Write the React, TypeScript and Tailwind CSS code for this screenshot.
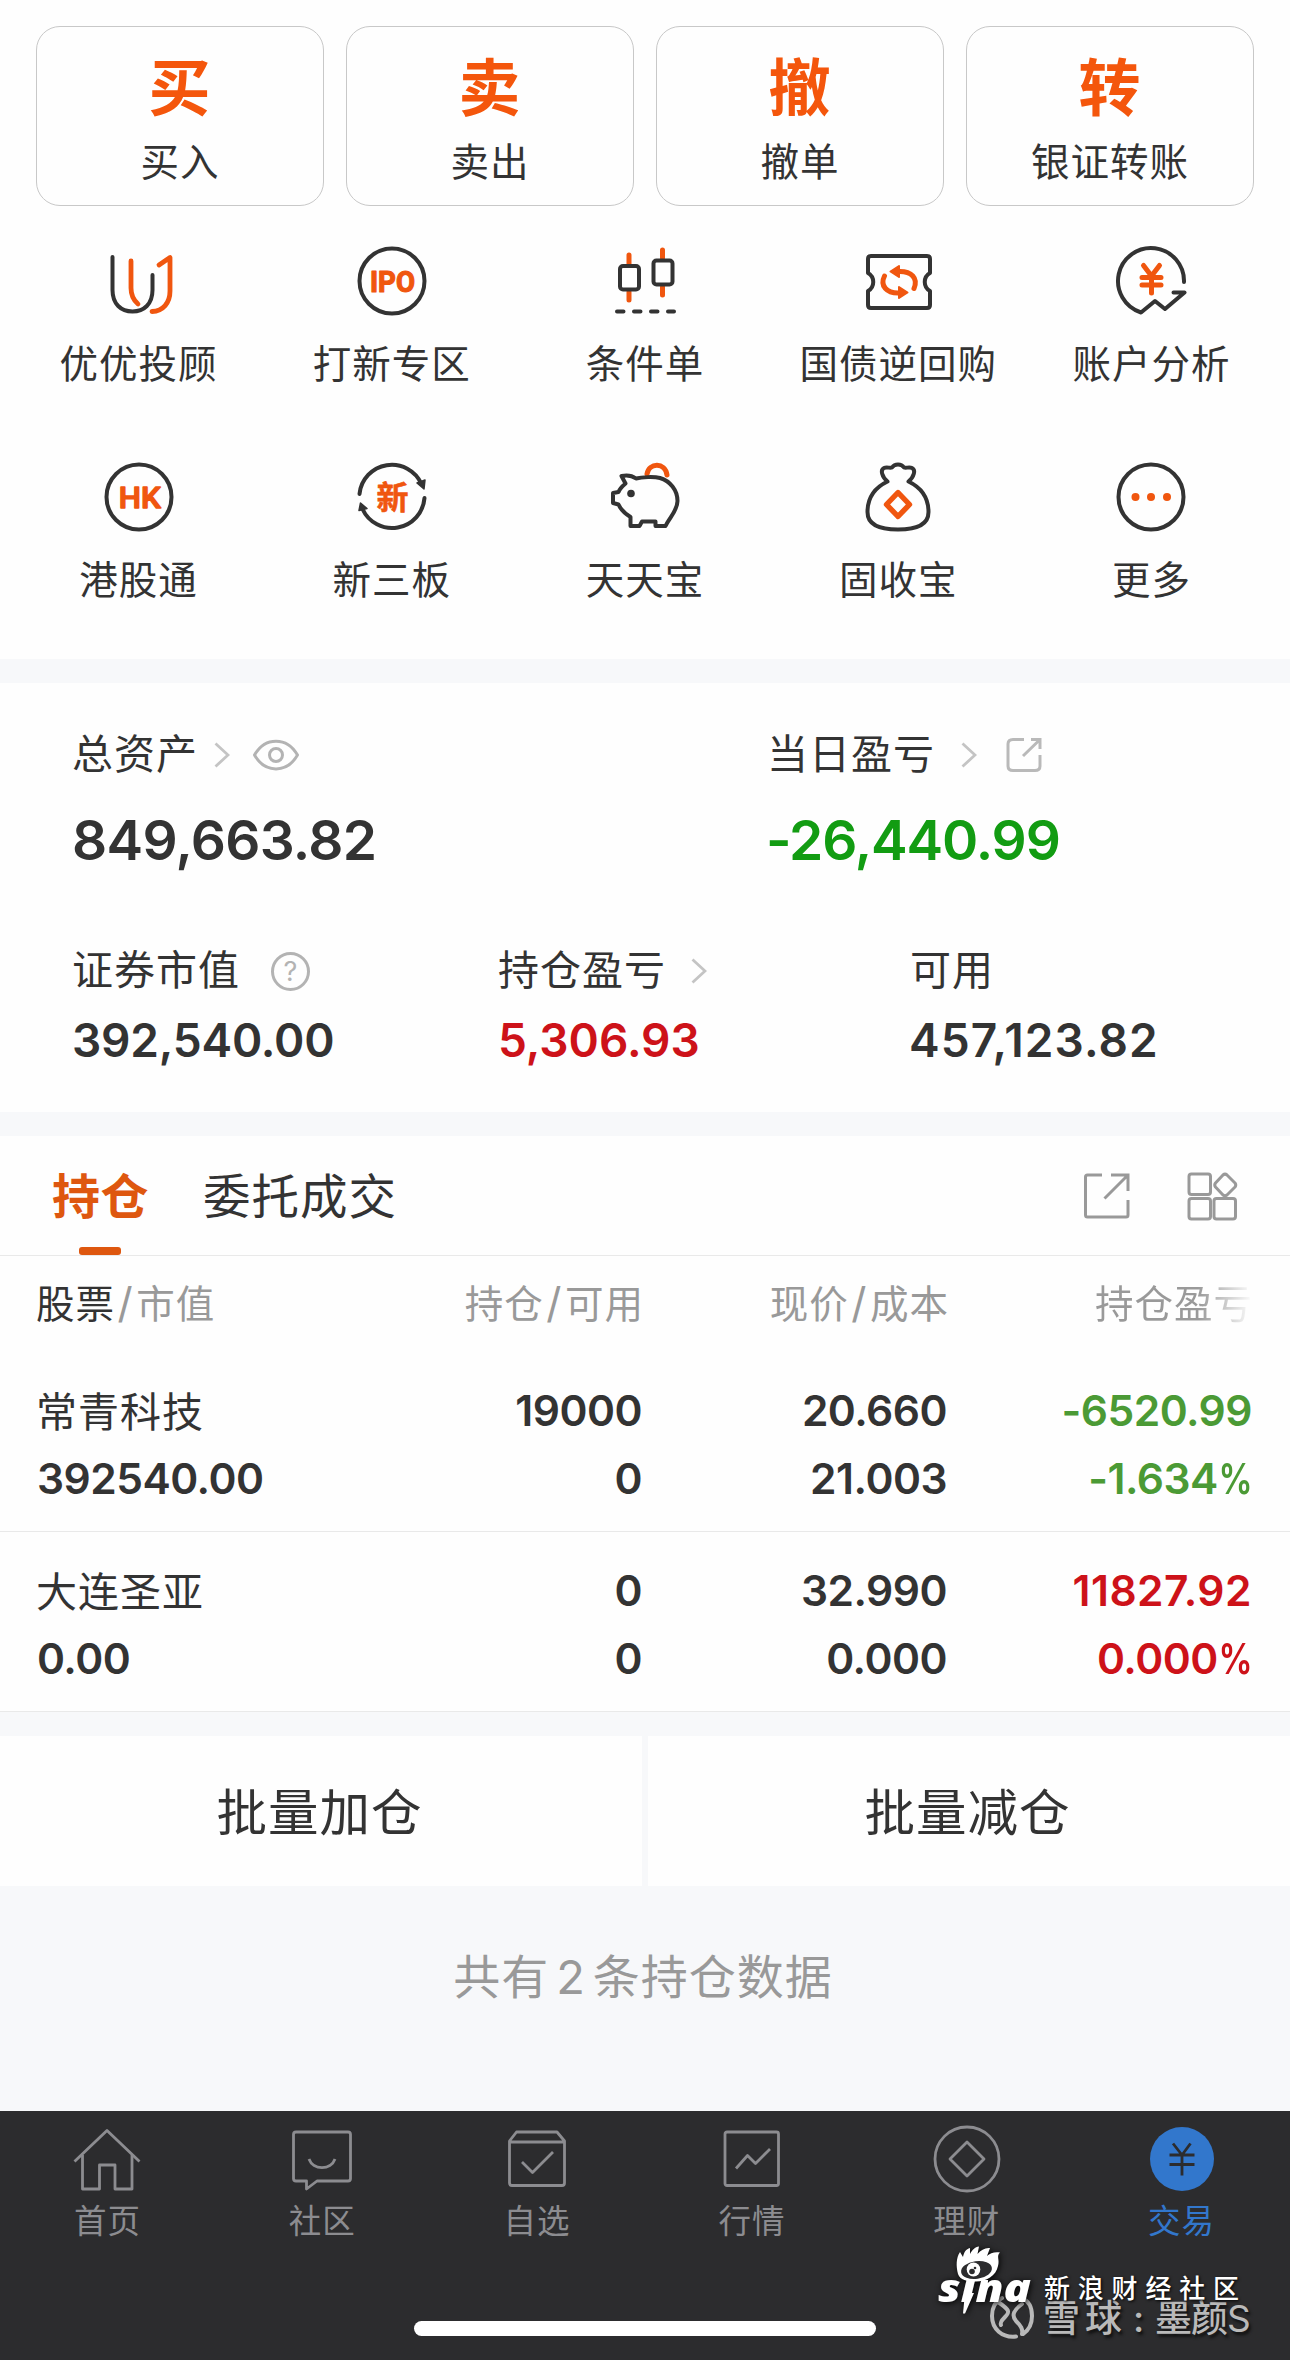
import type React from "react"

const DARK = "#333333"
const ORANGE = "#f0560f"

type IconProps = { children: React.ReactNode }

// 72x72 canvas shared by the shortcut icons
function ShortcutIcon({ children }: IconProps) {
  return (
    <svg
      className="w-[72px] h-[72px]"
      viewBox="0 0 72 72"
      fill="none"
      stroke={DARK}
      strokeWidth="4"
      strokeLinecap="round"
      strokeLinejoin="round"
    >
      {children}
    </svg>
  )
}

function TabIcon({ children }: IconProps) {
  return (
    <svg className="w-[72px] h-[72px]" viewBox="0 0 72 72" fill="none" stroke="currentColor" strokeWidth="2.8" strokeLinejoin="round">
      {children}
    </svg>
  )
}

function Chevron({ className = "" }: { className?: string }) {
  return (
    <svg className={`w-4 h-[26px] ${className}`} viewBox="0 0 16 26" fill="none" stroke="#c4c4c4" strokeWidth="2.8">
      <path d="M1.5 1.5 L14 13 L1.5 24.5" />
    </svg>
  )
}

const actions = [
  { mark: "买", label: "买入" },
  { mark: "卖", label: "卖出" },
  { mark: "撤", label: "撤单" },
  { mark: "转", label: "银证转账" },
]

const shortcuts = [
  {
    label: "优优投顾",
    icon: (
      <ShortcutIcon>
        <path d="M9.5 12 V45 C9.5 59 18 66.5 29.5 66.5 S49.5 59 49.5 45 V30" />
        <path d="M28 16 V43 Q28 53 35 59" stroke={ORANGE} strokeWidth="4.8" />
        <path d="M56 20 L67 12.5 V46 C67 58 60 66 49 66.5" stroke={ORANGE} strokeWidth="4.8" />
      </ShortcutIcon>
    ),
  },
  {
    label: "打新专区",
    icon: (
      <ShortcutIcon>
        <circle cx="36" cy="36" r="32.5" />
        <text
          x="36.5"
          y="46.5"
          textAnchor="middle"
          textLength="45"
          lengthAdjust="spacingAndGlyphs"
          fontFamily="Roboto, sans-serif"
          fontSize="30"
          fontWeight="700"
          fill={ORANGE}
          stroke={ORANGE}
          strokeWidth="1.2"
        >
          IPO
        </text>
      </ShortcutIcon>
    ),
  },
  {
    label: "条件单",
    icon: (
      <ShortcutIcon>
        <g transform="translate(-1 0)">
          <path d="M21 10 V19 M21 47 V55 M54.5 5 V13 M54.5 42 V50" stroke={ORANGE} strokeWidth="5" />
          <rect x="12" y="21" width="19" height="23.5" rx="3" />
          <rect x="45.5" y="15.5" width="19" height="24" rx="3" />
          <path d="M9 66.5 H15.5 M26 66.5 H32.5 M43 66.5 H49.5 M60 66.5 H66" />
        </g>
      </ShortcutIcon>
    ),
  },
  {
    label: "国债逆回购",
    icon: (
      <ShortcutIcon>
        <path d="M9 11 H65 Q68 11 68 14 V28 C61 32 61 42 68 46 V60 Q68 63 65 63 H9 Q6 63 6 60 V46 C13 42 13 32 6 28 V14 Q6 11 9 11 Z" />
        <path d="M22.5 31 C17.5 41 25 48 36 48" stroke={ORANGE} strokeWidth="5" />
        <path d="M52 43.5 C56.5 33 49 26.5 38 26.5" stroke={ORANGE} strokeWidth="5" />
        <path d="M37 42 L45.5 47.5 L37 53 Z M37 21 L28.5 26.5 L37 32 Z" fill={ORANGE} stroke={ORANGE} strokeWidth="2" />
      </ShortcutIcon>
    ),
  },
  {
    label: "账户分析",
    icon: (
      <ShortcutIcon>
        <path d="M69 37 A33 33 0 1 0 26 67.5 L40 56 L50 64 L69.5 47.5 H58.5" />
        <path d="M28.5 20.5 L36.5 31 L44.5 20.5 M36.5 31 V48 M27 32.5 H46 M27 40 H46" stroke={ORANGE} strokeWidth="5" />
      </ShortcutIcon>
    ),
  },
  {
    label: "港股通",
    icon: (
      <ShortcutIcon>
        <circle cx="36" cy="36" r="32.5" />
        <text
          x="36.8"
          y="46.5"
          textAnchor="middle"
          textLength="42"
          lengthAdjust="spacingAndGlyphs"
          fontFamily="Roboto, sans-serif"
          fontSize="30"
          fontWeight="500"
          fill={ORANGE}
          stroke={ORANGE}
          strokeWidth="1.4"
        >
          HK
        </text>
      </ShortcutIcon>
    ),
  },
  {
    label: "新三板",
    icon: (
      <ShortcutIcon>
        <path d="M3.5 33 A32.5 32.5 0 0 1 65.5 23" />
        <path d="M68.5 37 A32.5 32.5 0 0 1 6.5 48" />
        <path d="M61 22 L69 19 L68 28 Z M3 49.5 L11 47.5 L4.5 42 Z" fill={DARK} strokeWidth="1.5" />
        <text
          x="36.5"
          y="47.5"
          textAnchor="middle"
          fontFamily="'Noto Sans CJK SC', sans-serif"
          fontSize="32"
          fontWeight="700"
          fill={ORANGE}
          stroke={ORANGE}
          strokeWidth="0.6"
        >
          新
        </text>
      </ShortcutIcon>
    ),
  },
  {
    label: "天天宝",
    icon: (
      <ShortcutIcon>
        <g transform="translate(-1 0)">
          <path d="M39 13 C41 1.5 57 1 59 14" stroke={ORANGE} strokeWidth="5" />
          <path d="M13.5 15 C18 14 24 14.5 28 17.5 C34 16 46 15.5 52 17 C62 20 69.5 29 69.5 40 C69.5 50 61 57 57.5 65 H47.5 V60.5 H34 L31.5 65 H22.5 V56 C16 52 13 49 10.5 43.5 L5 42 V32 L10.5 31 C12 27 14.5 25 17.5 22.5 Z" />
          <circle cx="23" cy="32.5" r="3.8" fill={DARK} stroke="none" />
        </g>
      </ShortcutIcon>
    ),
  },
  {
    label: "固收宝",
    icon: (
      <ShortcutIcon>
        <path d="M25.5 20.5 C20 16 18 9 22 7 C25 5.5 28 7.5 30 6.5 C32 3.5 33.5 3.5 36 3.5 S40 3.5 42 6.5 C44 7.5 47 5.5 50 7 C54 9 52 16 46.5 20.5 C60 27 66.5 38 66.5 51 C66.5 64 54 68.5 36 68.5 S5.5 64 5.5 51 C5.5 38 12 27 25.5 20.5 Z" />
        <path d="M36 31.5 L47.5 43.5 L36 55.5 L24.5 43.5 Z" stroke={ORANGE} strokeWidth="5.4" />
      </ShortcutIcon>
    ),
  },
  {
    label: "更多",
    icon: (
      <ShortcutIcon>
        <circle cx="36" cy="36" r="32.5" />
        <g fill={ORANGE} stroke="none">
          <circle cx="20.5" cy="36" r="4" />
          <circle cx="36" cy="36" r="4" />
          <circle cx="52" cy="36" r="4" />
        </g>
      </ShortcutIcon>
    ),
  },
]

const holdings = [
  {
    name: "常青科技",
    marketValue: "392540.00",
    amount: "19000",
    available: "0",
    price: "20.660",
    cost: "21.003",
    profit: "-6520.99",
    rate: "-1.634",
    color: "text-[#4b9a35]",
    spacing: "tracking-[-0.5px]",
  },
  {
    name: "大连圣亚",
    marketValue: "0.00",
    amount: "0",
    available: "0",
    price: "32.990",
    cost: "0.000",
    profit: "11827.92",
    rate: "0.000",
    color: "text-[#cd1219]",
    spacing: "tracking-[0.5px]",
  },
]

const tabs = [
  {
    label: "首页",
    icon: (
      <TabIcon>
        <path d="M3.5 38.5 L36 7.5 L68.5 38.5" />
        <path d="M11.5 32 V66 H28.5 V42 H44 V66 H61 V32" />
      </TabIcon>
    ),
  },
  {
    label: "社区",
    icon: (
      <TabIcon>
        <path d="M10 9 H62 Q64.5 9 64.5 11.5 V55.5 Q64.5 58 62 58 H31 L20.5 66 V58 H10 Q7.5 58 7.5 55.5 V11.5 Q7.5 9 10 9 Z" />
        <path d="M23 36 C27 47.5 45 47.5 49 36" />
      </TabIcon>
    ),
  },
  {
    label: "自选",
    icon: (
      <TabIcon>
        <path d="M8.5 18 L15.5 9 H56 L63.5 18 V60 Q63.5 62.5 61 62.5 H11 Q8.5 62.5 8.5 60 Z M8.5 19 H63.5" />
        <path d="M21 39 L31.5 49.5 L52 29" />
      </TabIcon>
    ),
  },
  {
    label: "行情",
    icon: (
      <TabIcon>
        <rect x="9" y="9" width="53.5" height="53.5" rx="2" />
        <path d="M20 45.5 L31.5 32.5 L39.5 40.5 L54 26" />
      </TabIcon>
    ),
  },
  {
    label: "理财",
    icon: (
      <TabIcon>
        <circle cx="36" cy="36" r="32" />
        <path d="M36 19 L53 36 L36 53 L19 36 Z" />
      </TabIcon>
    ),
  },
  {
    label: "交易",
    active: true,
    icon: (
      <TabIcon>
        <circle cx="36" cy="36" r="32" fill="currentColor" stroke="none" />
        <path d="M27 20.5 L36 32 L44.5 20.5 M36 32 V52.5 M23.5 32 H48.5 M23.5 41.5 H48.5" stroke="#2c2c2e" />
      </TabIcon>
    ),
  },
]

function Slash() {
  return <span className="mx-[2.5px] text-[42px] leading-none">/</span>
}

function Watermarks() {
  return (
    <>
      <svg className="absolute left-[988px] top-[183px] w-[48px] h-[46px]" viewBox="0 0 48 46" fill="none" stroke="#b9b9b9" strokeWidth="4" strokeLinecap="round">
        <path d="M28 42.5 C14 44 4 35 4 22 C4 13 8 7 14 4 M34 4 C41 7 44 14 44 22 C44 30 41 36 35 40" />
        <path d="M10 8 C22 16 22 18 17 23 C13 27 12 29 13 31" />
        <path d="M34 10 C26 16 23 21 28 27 C33 32 35 35 34 40" />
      </svg>
      <div className="absolute left-[1043px] top-[189px] flex h-[37px] items-center whitespace-nowrap text-[37px] font-medium leading-none text-[#b9b9b9] [text-shadow:2px_3px_3px_#111]">
        <span className="w-[90px] tracking-[5px]">雪球</span>
        <span className="w-[22px]">:</span>
        <span className="tracking-[-1px]">墨颜</span>
        <span className="font-normal">S</span>
      </div>
      <svg className="absolute left-[934px] top-[132px] w-[104px] h-[76px] overflow-visible drop-shadow-[1px_1px_3px_#000]" viewBox="0 0 104 76">
        <path
          fill="#fff"
          d="M24 31 C22 23 22 15 26 9 L29 14 C30 9 32 6 36 5 L36 11 C38 7 41 4 45 3.5 L43.5 11 C47 7 51 4.5 56 5 L53 13 C56 10 61 8.5 66 9.5 C62 13 66 17 64 23 C62 33 52 38.5 42 38.5 C33 38.5 26 37 24 31 Z"
        />
        <ellipse cx="42.5" cy="27" rx="15.5" ry="8.8" fill="#2c2c2e" transform="rotate(-8 42.5 27)" />
        <ellipse cx="39.5" cy="26.5" rx="6.8" ry="7" fill="#fff" />
        <circle cx="38" cy="28.5" r="2.8" fill="#2c2c2e" />
        <circle cx="41" cy="25" r="1.3" fill="#2c2c2e" />
        <text
          x="4"
          y="58.5"
          textLength="93"
          lengthAdjust="spacingAndGlyphs"
          fontFamily="'Open Sans', sans-serif"
          fontSize="39"
          fontStyle="italic"
          fontWeight="800"
          fill="#fff"
        >
          sına
        </text>
        <path fill="#fff" d="M31 50 H40 L31 70.5 L29 70.5 Z" />
      </svg>
      <span className="absolute left-[1044px] top-[165px] whitespace-nowrap text-[26px] font-medium leading-[26px] tracking-[7.8px] text-white [text-shadow:1px_1px_3px_#000]">
        新浪财经社区
      </span>
    </>
  )
}

export default function App() {
  return (
    <div
      lang="zh-CN"
      className="flex h-[2360px] w-[1290px] flex-col overflow-hidden bg-[#f7f8fa] font-[Inter,'Noto_Sans_CJK_SC',sans-serif] text-[#333333]"
    >
      {/* Trade actions and shortcuts */}
      <section className="h-[659px] bg-[#fefefe] pt-[26px]">
        <div className="grid grid-cols-4 gap-[22px] px-9">
          {actions.map((action) => (
            <button
              key={action.mark}
              className="flex h-[180px] flex-col items-center rounded-3xl border border-[#c8c8c8] pt-[30px]"
            >
              <span className="-ml-px text-[62px] font-bold leading-[64px] text-[#f4560c]">{action.mark}</span>
              <span className="mt-[21px] text-[38.5px] leading-[40px] tracking-[1px]">{action.label}</span>
            </button>
          ))}
        </div>

        <div className="mt-[39px] grid grid-cols-5 gap-y-[78px] pl-[12px] pr-[12px]">
          {shortcuts.map((item) => (
            <div key={item.label} className="flex flex-col items-center">
              {item.icon}
              <span className="mt-[27px] -mb-px text-[38.5px] leading-[40px] tracking-[1px]">{item.label}</span>
            </div>
          ))}
        </div>
      </section>

      {/* Assets */}
      <section className="mt-6 h-[429px] bg-[#fefefe] pl-[72px] pt-[50px]">
        <div className="flex">
          <div className="w-[695px]">
            <div className="flex h-11 items-center">
              <span className="text-[41px] tracking-[1px]">总资产</span>
              <Chevron className="ml-[16px]" />
              <svg className="ml-[22px] w-[48px] h-[34px]" viewBox="0 0 48 34" fill="none" stroke="#b3b3b3" strokeWidth="3">
                <path d="M2.5 17 C13 -1.5 35 -1.5 45.5 17 C35 35.5 13 35.5 2.5 17 Z" strokeLinejoin="round" />
                <circle cx="24" cy="17" r="6.5" />
              </svg>
            </div>
            <p className="mt-[33px] text-[55px] font-semibold leading-[60px] tracking-[-0.7px]">849,663.82</p>
          </div>
          <div>
            <div className="flex h-11 items-center">
              <span className="text-[41px] tracking-[1px]">当日盈亏</span>
              <Chevron className="ml-[26px]" />
              <svg className="ml-[28px] w-[38px] h-[36px]" viewBox="0 0 38 36" fill="none" stroke="#b9b9b9" strokeWidth="3">
                <path d="M19 2.5 H8 Q3 2.5 3 7 V29 Q3 33.5 8 33.5 H30 Q35 33.5 35 29 V18" />
                <path d="M26 2.5 H35 V12 M35 2.5 L18 19" />
              </svg>
            </div>
            <p className="-ml-px mt-[33px] text-[55px] font-semibold leading-[60px] tracking-[-1.1px] text-[#129c12]">-26,440.99</p>
          </div>
        </div>

        <div className="mt-[79px] flex">
          <div className="w-[426px]">
            <div className="flex h-11 items-center">
              <span className="text-[41px] tracking-[1px]">证券市值</span>
              <span className="ml-[31px] flex h-[39px] w-[39px] items-center justify-center rounded-full border-3 border-[#b3b3b3] text-[27px] leading-none text-[#b3b3b3]">
                ?
              </span>
            </div>
            <p className="mt-[22px] text-[46px] font-semibold leading-[50px] tracking-[-0.2px]">392,540.00</p>
          </div>
          <div className="w-[412px]">
            <div className="flex h-11 items-center">
              <span className="text-[41px] tracking-[1px]">持仓盈亏</span>
              <Chevron className="ml-[25px]" />
            </div>
            <p className="mt-[22px] text-[46px] font-semibold leading-[50px] text-[#cd1219]">5,306.93</p>
          </div>
          <div>
            <div className="flex h-11 items-center">
              <span className="text-[41px] tracking-[1px]">可用</span>
            </div>
            <p className="-ml-px mt-[22px] text-[46px] font-semibold leading-[50px] tracking-[1.1px]">457,123.82</p>
          </div>
        </div>
      </section>

      {/* Holdings */}
      <section className="mt-6 bg-[#fefefe]">
        <div className="flex h-[120px] items-center border-b border-[#e9e9e9] pl-[52px] pr-[52px]">
          <div className="relative flex h-full items-center pt-[3px] text-[48px] font-semibold tracking-[0.5px] text-[#de570f]">
            持仓
            <span className="absolute bottom-0 left-[27px] h-2 w-[42px] rounded-[3px] bg-[#de570f]" />
          </div>
          <span className="ml-[54px] pt-0.5 text-[47.5px] tracking-[1px]">委托成交</span>
          <svg className="ml-auto w-[48px] h-[48px]" viewBox="0 0 48 48" fill="none" stroke="#999999" strokeWidth="3">
            <path d="M19 3 H4.5 Q2.5 3 2.5 5 V43 Q2.5 45 4.5 45 H43 Q45 45 45 43 V28" />
            <path d="M28 3 H45 V19 M45 3 L21.5 26.5" />
          </svg>
          <svg className="ml-[55px] w-[52px] h-[50px]" viewBox="0 0 52 50" fill="none" stroke="#999999" strokeWidth="3" strokeLinejoin="round">
            <rect x="3" y="3" width="21.5" height="20.5" rx="2.5" />
            <rect x="3" y="27.5" width="21.5" height="20.5" rx="2.5" />
            <rect x="28" y="27.5" width="21.5" height="20.5" rx="2.5" />
            <path d="M37 4 Q39 2.3 41 4 L49 12 Q50.5 14 49 16 L41 24 Q39 25.5 37 24 L29.5 16 Q28 14 29.5 12 Z" />
          </svg>
        </div>

        <div className="grid h-24 grid-cols-[300px_305px_305px_305px] items-center pl-[37px] pt-[2px] text-right text-[38.5px] tracking-[1px] text-[#999999]">
          <span className="-ml-px text-left">
            <span className="text-[#333333]">股票</span>
            <Slash />
            市值
          </span>
          <span className="-mr-[2px]">
            持仓
            <Slash />
            可用
          </span>
          <span className="-mr-[2px]">
            现价
            <Slash />
            成本
          </span>
          <span className="-mr-px ml-auto bg-linear-to-r from-[#999999] from-65% to-[#fefefe] bg-clip-text text-transparent">持仓盈亏</span>
        </div>

        {holdings.map((row) => (
          <div
            key={row.name}
            className="grid h-[180px] grid-cols-[300px_305px_305px_305px] content-start gap-y-4 border-b border-[#e9e9e9] pl-[37px] pt-[33px] text-right text-[42.5px] font-semibold leading-[52px] tracking-[-0.5px]"
          >
            <span className="-ml-px pt-[2px] text-left text-[41px] font-normal leading-[50px] tracking-[1px]">{row.name}</span>
            <span>{row.amount}</span>
            <span>{row.price}</span>
            <span className={`${row.color} ${row.spacing}`}>{row.profit}</span>
            <span className="text-left">{row.marketValue}</span>
            <span>{row.available}</span>
            <span>{row.cost}</span>
            <span className={row.color}>
              {row.rate}
              <span className="-ml-[8px] inline-block origin-right scale-x-80">%</span>
            </span>
          </div>
        ))}
      </section>

      <div className="mt-6 grid h-[150px] grid-cols-2 gap-[6px] text-[50.5px] tracking-[1px]">
        <button className="bg-[#fefefe] pt-[4px] pr-[3px]">批量加仓</button>
        <button className="bg-[#fefefe] pt-[4px] pr-[3px]">批量减仓</button>
      </div>

      <p className="mt-[66px] pr-[4px] text-center text-[47px] leading-[50px] tracking-[1px] text-[#999999]">
        共有<span className="mx-[7px]">2</span>条持仓数据
      </p>

      {/* Bottom tab bar */}
      <nav className="relative mt-auto flex h-[249px] flex-col items-center bg-[#2c2c2e]">
        <div className="grid w-full grid-cols-6 pr-px pt-3">
          {tabs.map((tab) => (
            <div
              key={tab.label}
              className={`flex flex-col items-center ${tab.active ? "text-[#3277cc]" : "text-[#8c8c90]"}`}
            >
              {tab.icon}
              <span className="mt-[11px] text-[32.5px] leading-8 tracking-[1px]">{tab.label}</span>
            </div>
          ))}
        </div>
        <div className="mt-auto mb-[24px] h-[15px] w-[462px] rounded-full bg-white" />
        <Watermarks />
      </nav>
    </div>
  )
}
